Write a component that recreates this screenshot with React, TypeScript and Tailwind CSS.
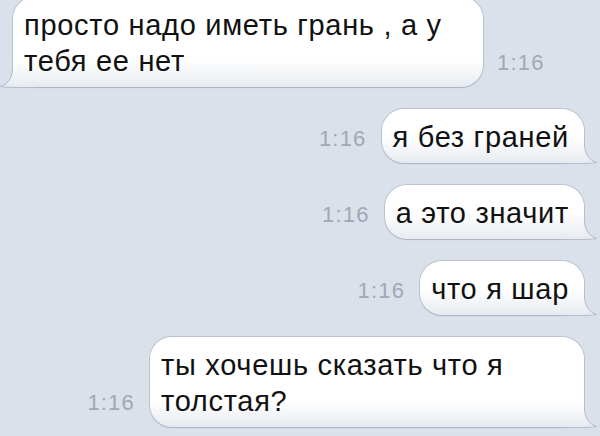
import React from "react";

type Msg = {
  lines: string[];
  out: boolean;
  width?: string;
};

const MESSAGES: Msg[] = [
  { lines: ["просто надо иметь грань , а у", "тебя ее нет"], out: false, width: "w-[470px]" },
  { lines: ["я без граней"], out: true },
  { lines: ["а это значит"], out: true },
  { lines: ["что я шар"], out: true },
  { lines: ["ты хочешь сказать что я", "толстая?"], out: true, width: "w-[434px]" },
];

function Tail({ out }: { out: boolean }) {
  return (
    <svg
      width="40"
      height="22"
      viewBox="0 0 40 22"
      className={[
        "absolute bottom-[-1px]",
        out ? "right-[-14px]" : "left-[-14px] -scale-x-100",
      ].join(" ")}
      aria-hidden="true"
    >
      <defs>
        <linearGradient id="tailfill" x1="0" y1="-5" x2="0" y2="21" gradientUnits="userSpaceOnUse">
          <stop offset="0" stopColor="#ffffff" />
          <stop offset="1" stopColor="#e6eaf0" />
        </linearGradient>
      </defs>
      <path d="M3 0 L26 0 C26 11 29 17 38.5 20.5 C31 21.6 22 21 3 21 Z" fill="url(#tailfill)" />
      <path
        d="M26.5 0 C26.5 11 29.5 17 38.5 20.5 C31 21.8 22 21.5 3 21.5"
        fill="none"
        stroke="#b5bcc8"
        strokeWidth="1"
      />
    </svg>
  );
}

function Time() {
  return (
    <span className="mb-[6px] shrink-0 text-[22px] leading-[36px] tracking-[1.2px] text-[#a1a8b5]">
      1:16
    </span>
  );
}

function Bubble({ m }: { m: Msg }) {
  return (
    <div
      className={[
        "relative rounded-[22px] pt-[10px] pb-[8px] pl-[11px] pr-[15px]",
        "bg-[linear-gradient(to_top,#e6eaf0,#ffffff_26px)]",
        "shadow-[0_0_0_1px_rgba(160,170,185,0.55),0_1px_1px_rgba(70,80,100,0.25)]",
        "text-[29px] leading-[36px] tracking-[0.7px] text-[#111111]",
        m.width ?? "",
      ].join(" ")}
    >
      <Tail out={m.out} />
      <p className="relative whitespace-nowrap">
        {m.lines.map((l, i) => (
          <React.Fragment key={i}>
            {i > 0 && <br />}
            {l}
          </React.Fragment>
        ))}
      </p>
    </div>
  );
}

export default function App() {
  return (
    <div className="h-[436px] w-[600px] overflow-hidden bg-[#dbe1ea] font-['Liberation_Sans',Arial,sans-serif]">
      <div className="-mt-[3px] flex flex-col gap-[22px] pl-[13px] pr-[16px]">
        {MESSAGES.map((m, i) =>
          m.out ? (
            <div key={i} className="flex items-end justify-end gap-[15px]">
              <Time />
              <Bubble m={m} />
            </div>
          ) : (
            <div key={i} className="flex items-end gap-[14px]">
              <Bubble m={m} />
              <Time />
            </div>
          )
        )}
      </div>
    </div>
  );
}
